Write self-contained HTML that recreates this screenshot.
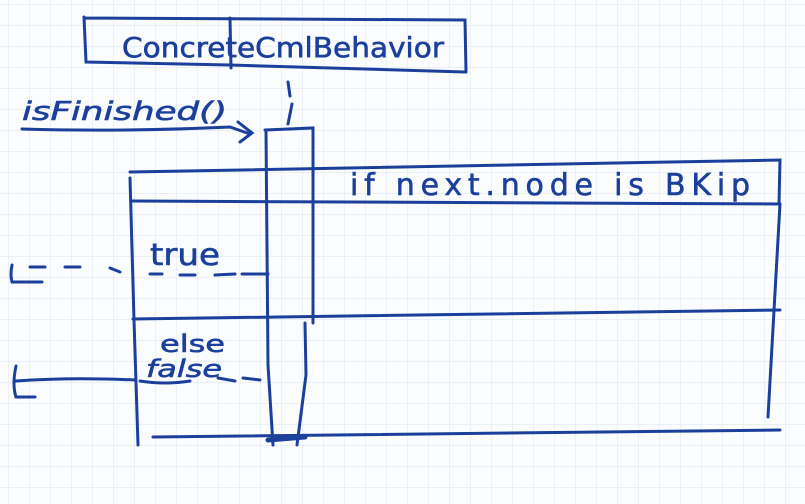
<!DOCTYPE html>
<html><head><meta charset="utf-8"><style>
html,body{margin:0;padding:0;background:#fff}
svg{display:block}
text{font-family:"DejaVu Sans","Liberation Sans",sans-serif;fill:#1b409c;stroke:#1b409c;stroke-width:0.6}
</style></head><body>
<svg width="805" height="504" viewBox="0 0 805 504" xmlns="http://www.w3.org/2000/svg">
<defs>
<pattern id="g" width="21" height="21" patternUnits="userSpaceOnUse" x="9" y="5">
<path d="M21 0V21M0 21H21" stroke="#dfe9f4" stroke-width="1.2" fill="none"/>
</pattern>
</defs>
<rect width="805" height="504" fill="#fbfcfe"/>
<rect width="805" height="504" fill="url(#g)"/>
<g stroke="#1b409c" stroke-width="3" fill="none" stroke-linecap="round">
<path d="M84 17 L86 62 L230 65 L465 72 M84 18 L465 20 L466 72"/>
<path d="M230 18 L231 68"/>
<path d="M288 82 L290 96 M292 104 L288 124"/>
<path d="M22 129 Q120 132 230 127 L250 134 M238 122 L252 133 L240 142"/>
<path d="M265 130 L313 128 L313 323 M266 130 L268 365 L273 445 M305 323 L306 375 L297 445"/>
<path d="M130 172 L780 160 L779 204 M132 201 L780 204"/>
<path d="M130 178 L134 320 L138 445"/>
<path d="M133 319 L780 310"/>
<path d="M780 204 L768 417"/>
<path d="M153 437 L780 430"/>
<path d="M268 440 L305 437" stroke-width="5"/>
<path d="M12 265 Q10 275 12 282 L42 282 M30 267 L45 267 M65 267 L80 267 M110 268 L120 272 M150 274 L162 274 M180 275 L195 275 M215 275 L235 274 M242 274 L268 274"/>
<path d="M16 366 Q12 385 16 397 L35 397 M16 381 Q70 377 135 380 M140 381 Q165 385 190 381 M218 378 L235 381 M243 378 L260 380"/>
</g>
<text x="122" y="57" font-size="28" textLength="322" lengthAdjust="spacingAndGlyphs">ConcreteCmlBehavior</text>
<text x="22" y="120" font-size="26" font-style="italic" textLength="205" lengthAdjust="spacingAndGlyphs">isFinished()</text>
<text x="350" y="195" font-size="30" textLength="400" lengthAdjust="spacing">if next.node is BKip</text>
<text x="150" y="265" font-size="30" textLength="70" lengthAdjust="spacingAndGlyphs">true</text>
<text x="160" y="352" font-size="24" textLength="65" lengthAdjust="spacingAndGlyphs">else</text>
<text x="146" y="377" font-size="24" font-style="italic" textLength="76" lengthAdjust="spacingAndGlyphs">false</text>
</svg>
</body></html>
